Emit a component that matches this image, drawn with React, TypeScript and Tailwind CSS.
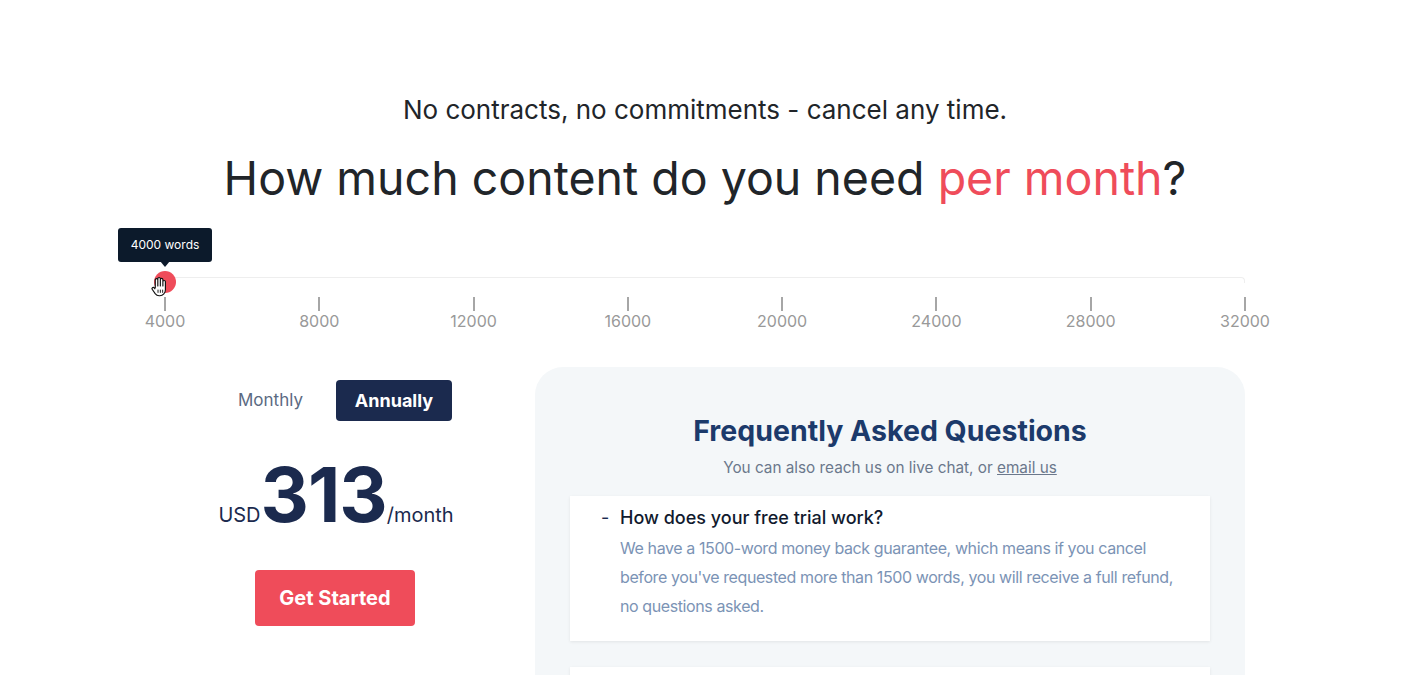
import React from "react";

const ticks = [4000, 8000, 12000, 16000, 20000, 24000, 28000, 32000];

function HandCursor() {
  return (
    <svg width="19" height="22" viewBox="0 0 18 20" className="absolute left-[-4px] top-[5px]">
      <path
        d="M5 11V3.2a1.2 1.2 0 0 1 2.4 0V9V2.2a1.2 1.2 0 0 1 2.4 0V9V3a1.2 1.2 0 0 1 2.4 0v6V5a1.2 1.2 0 0 1 2.4 0v7.5c0 3.2-2.2 5.8-5.3 5.8H8.6c-1.6 0-2.8-.8-3.7-2L2.2 12.4a1.2 1.2 0 0 1 1.8-1.6L5 12"
        fill="#fff"
        stroke="#111"
        strokeWidth="1.1"
        strokeLinejoin="round"
      />
      <path d="M7.6 12.5v3M9.8 12.5v3M12 12.5v3" stroke="#111" strokeWidth="0.9" />
    </svg>
  );
}

function Slider() {
  return (
    <div className="w-[1080px] mx-auto">
      <div className="relative h-[49px]">
        <div className="absolute left-[-47px] top-0 h-[34px] w-[94px] bg-[#0c1a2b] rounded-[3px] flex items-center justify-center text-white text-[12px]">
          4000 words
          <div className="absolute bottom-[-5px] left-[42px] w-0 h-0 border-l-[5px] border-r-[5px] border-t-[6px] border-l-transparent border-r-transparent border-t-[#0c1a2b]" />
        </div>
        <div className="absolute left-0 right-0 top-[49px] h-[6px] border-t border-l border-r border-[#eeeeee] rounded-t-[4px]" />
        <div className="absolute left-[-11px] top-[43px] w-[22px] h-[22px] rounded-full bg-[#ef4c5a]">
          <div className="relative">
            <HandCursor />
          </div>
        </div>
      </div>
      <div className="flex justify-between mt-[20px]">
        {ticks.map((t) => (
          <div key={t} className="w-0 flex flex-col items-center">
            <div className="w-[2px] h-[14px] bg-[#a6a6a6]" />
            <div className="mt-[2px] text-[16px] leading-4 text-[#999999]">{t}</div>
          </div>
        ))}
      </div>
    </div>
  );
}

function PriceColumn() {
  return (
    <div className="w-[340px] flex flex-col items-center">
      <div className="flex items-center gap-[33px] ml-[20px] mt-[13px]">
        <span className="text-[17px] text-[#5b6a82]">Monthly</span>
        <button className="h-[41px] w-[116px] rounded-[4px] bg-[#1b2a4e] text-white text-[18px] font-bold">
          Annually
        </button>
      </div>
      <div className="flex items-baseline mt-[34px] ml-[2px] text-[#1b2a4e]">
        <span className="text-[20px]">USD</span>
        <span className="text-[75px] leading-[80px] font-bold tracking-[-1px]">313</span>
        <span className="text-[20px]">/month</span>
      </div>
      <button className="mt-[35px] h-[56px] w-[160px] rounded-[4px] bg-[#ef4c5a] text-white text-[20px] font-bold">
        Get Started
      </button>
      <div className="mt-[47px] self-start ml-[60px] text-[14px] text-[#d0d4da]">Words included per month</div>
    </div>
  );
}

function FaqCard() {
  return (
    <div className="w-[710px] bg-[#f4f7f9] rounded-[28px] px-[35px] pt-[46px] pb-[40px]">
      <h2 className="text-center text-[28.5px] leading-[36px] font-bold text-[#1c3a6b]">Frequently Asked Questions</h2>
      <p className="text-center text-[15.3px] leading-6 text-[#6b788c] mt-[7px]">
        You can also reach us on live chat, or <span className="underline">email us</span>
      </p>
      <div className="mt-[16px] bg-white shadow-[0_1px_3px_rgba(0,0,0,0.08)] pl-[31px] pr-[20px] pt-[8px] pb-[20px] flex">
        <div className="w-[19px] text-[18px] leading-[27px] text-[#1b2a4e]">-</div>
        <div className="flex-1">
          <div className="text-[18px] leading-[27px] font-medium text-[#111a2e]">How does your free trial work?</div>
          <p className="mt-[3px] text-[16px] leading-[29px] tracking-[-0.4px] text-[#7b93b5]">
            We have a 1500-word money back guarantee, which means if you cancel before you've requested more than
            1500 words, you will receive a full refund, no questions asked.
          </p>
        </div>
      </div>
      <div className="mt-[26px] bg-white shadow-[0_1px_3px_rgba(0,0,0,0.08)] h-[60px]" />
    </div>
  );
}

export default function App() {
  return (
    <div className="w-full h-[675px] overflow-hidden bg-white font-['Inter',sans-serif] text-[#212529]">
      <div className="pt-[94px] text-center">
        <p className="text-[26px] leading-8">No contracts, no commitments - cancel any time.</p>
        <h1 className="mt-[23px] text-[46.5px] leading-[58px] font-normal">
          How much content do you need <span className="text-[#ef4c5a]">per month</span>?
        </h1>
      </div>
      <div className="mt-[21px]">
        <Slider />
      </div>
      <div className="w-[1080px] mx-auto mt-[38px] flex gap-[30px] items-start">
        <PriceColumn />
        <FaqCard />
      </div>
    </div>
  );
}
